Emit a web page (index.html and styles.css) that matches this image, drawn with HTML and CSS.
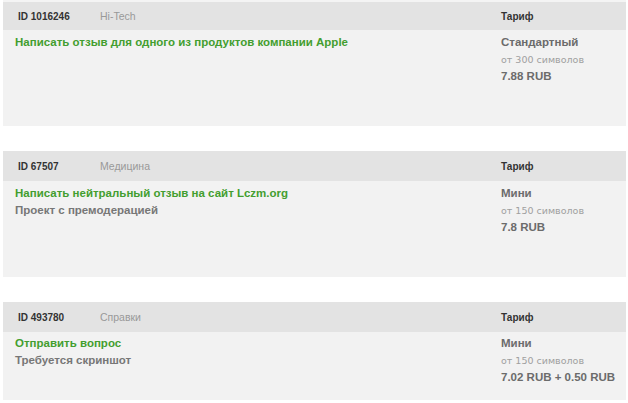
FILE: index.html
```html
<!DOCTYPE html>
<html lang="ru">
<head>
<meta charset="utf-8">
<link rel="stylesheet" href="styles.css">
</head>
<body>
<div class="list">
  <div class="card">
    <div class="card-head">
      <span class="id">ID 1016246</span>
      <span class="cat">Hi-Tech</span>
      <span class="tariff-label">Тариф</span>
    </div>
    <div class="card-body tall">
      <div class="task">
        <div class="title">Написать отзыв для одного из продуктов компании Apple</div>
      </div>
      <div class="tariff">
        <div class="plan">Стандартный</div>
        <div class="min">от 300 символов</div>
        <div class="price">7.88 RUB</div>
      </div>
    </div>
  </div>
  <div class="card">
    <div class="card-head">
      <span class="id">ID 67507</span>
      <span class="cat">Медицина</span>
      <span class="tariff-label">Тариф</span>
    </div>
    <div class="card-body tall">
      <div class="task">
        <div class="title">Написать нейтральный отзыв на сайт Lczm.org</div>
        <div class="note">Проект с премодерацией</div>
      </div>
      <div class="tariff">
        <div class="plan">Мини</div>
        <div class="min">от 150 символов</div>
        <div class="price">7.8 RUB</div>
      </div>
    </div>
  </div>
  <div class="card">
    <div class="card-head">
      <span class="id">ID 493780</span>
      <span class="cat">Справки</span>
      <span class="tariff-label">Тариф</span>
    </div>
    <div class="card-body">
      <div class="task">
        <div class="title">Отправить вопрос</div>
        <div class="note">Требуется скриншот</div>
      </div>
      <div class="tariff">
        <div class="plan">Мини</div>
        <div class="min">от 150 символов</div>
        <div class="price">7.02 RUB + 0.50 RUB</div>
      </div>
    </div>
  </div>
</div>
</body>
</html>
```
FILE: styles.css
```css
html, body {
  margin: 0;
  padding: 0;
  background: #ffffff;
}
body {
  padding: 0 2px 0 3px;
  font-family: "Liberation Sans", Arial, sans-serif;
}
.list {
  display: flex;
  flex-direction: column;
  gap: 25px;
}
.card:first-child .card-head {
  border-top: 2px solid #f4f4f4;
}
.card-head {
  display: grid;
  grid-template-columns: 82px 1fr 125px;
  align-items: center;
  height: 30px;
  box-sizing: border-box;
  padding-left: 15px;
  background: #e3e3e3;
  font-size: 10px;
}
.id {
  font-weight: bold;
  color: #333333;
}
.cat {
  font-size: 10.5px;
  color: #999999;
}
.tariff-label {
  font-weight: bold;
  color: #333333;
}
.card-body {
  display: grid;
  grid-template-columns: 1fr 125px;
  padding: 3px 0 14px 12px;
  background: #f2f2f2;
  line-height: 17px;
  box-sizing: border-box;
}
.card-body.tall {
  min-height: 96px;
  padding-top: 4px;
}
.title {
  font-size: 11.5px;
  font-weight: bold;
  color: #439e2f;
}
.note {
  font-size: 11.5px;
  font-weight: bold;
  color: #777777;
}
.plan,
.price {
  font-size: 11.5px;
  font-weight: bold;
  color: #6b6b6b;
}
.min {
  font-family: "DejaVu Sans", Verdana, sans-serif;
  font-size: 9.5px;
  color: #a0a0a0;
}
```
